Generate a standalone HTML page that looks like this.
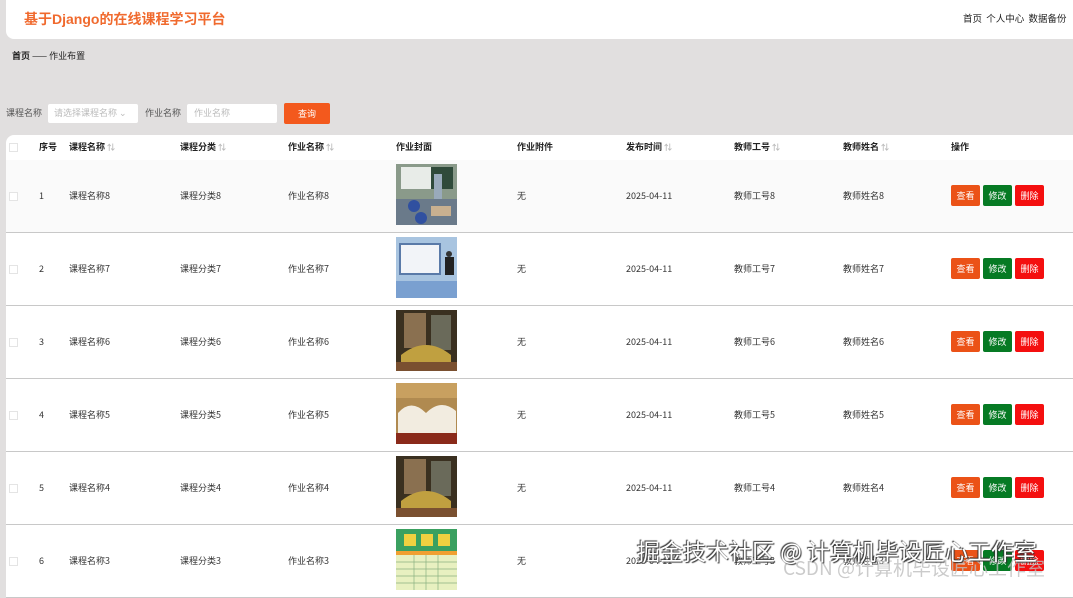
<!DOCTYPE html>
<html><head><meta charset="utf-8"><style>
*{margin:0;padding:0;box-sizing:border-box}
body{width:1073px;height:585px;overflow:hidden;background:#e1dfdf;font-family:"Noto Sans CJK SC","Liberation Sans",sans-serif;font-size:9px;line-height:12px;color:#333;position:relative}
.a{position:absolute;white-space:nowrap}
#hd{position:absolute;left:6px;top:0;width:1067px;height:39px;background:#fff;border-radius:0 0 0 8px}
.b{font-weight:bold;color:#222}
.row{position:absolute;left:6px;width:1067px;height:73px;background:#fff;border-bottom:1px solid #c8c8c8}
.cb{position:absolute;left:3px;width:9px;height:9px;border:1px solid #e4e4e4;background:#fff}
.img{position:absolute;left:390px;top:4px;width:61px;height:61px}
.btn{position:absolute;width:29px;height:21px;border-radius:2px;color:#fff;text-align:center;line-height:21px;font-size:9px}
.s{color:#bbb;font-size:8px}
</style></head><body>
<div id="hd"></div>
<div class="a" style="left:24px;top:10px;font-size:14px;line-height:18px;font-weight:bold;color:#f06a2e;font-family:'Liberation Sans','Noto Sans CJK SC',sans-serif">基于Django的在线课程学习平台</div>
<div class="a" style="left:963px;top:12px;font-size:9.5px;color:#222">首页&nbsp;&nbsp;个人中心&nbsp;&nbsp;数据备份</div>
<div class="a" style="left:12px;top:50px;color:#222"><b>首页</b> —— 作业布置</div>
<div class="a" style="left:6px;top:107px;color:#555">课程名称</div>
<div class="a" style="left:48px;top:104px;width:90px;height:19px;background:#fff;border-radius:2px;color:#bbb;padding:3px 6px">请选择课程名称 ⌄</div>
<div class="a" style="left:145px;top:107px;color:#555">作业名称</div>
<div class="a" style="left:187px;top:104px;width:90px;height:19px;background:#fff;border-radius:2px;color:#bbb;padding:3px 7px">作业名称</div>
<div class="a" style="left:284px;top:103px;width:46px;height:21px;background:#f3591d;border-radius:2px;color:#fff;text-align:center;line-height:21px">查询</div>
<div class="a" style="left:6px;top:135px;width:1067px;height:25px;background:#fff;border-radius:8px 0 0 0"></div>
<div class="a" style="left:9px;top:143px;width:9px;height:9px;border:1px solid #e4e4e4"></div>
<div class="a b" style="left:39px;top:141px">序号</div>
<div class="a b" style="left:69px;top:141px">课程名称 <span class="s">⇅</span></div>
<div class="a b" style="left:180px;top:141px">课程分类 <span class="s">⇅</span></div>
<div class="a b" style="left:288px;top:141px">作业名称 <span class="s">⇅</span></div>
<div class="a b" style="left:396px;top:141px">作业封面</div>
<div class="a b" style="left:517px;top:141px">作业附件</div>
<div class="a b" style="left:626px;top:141px">发布时间 <span class="s">⇅</span></div>
<div class="a b" style="left:734px;top:141px">教师工号 <span class="s">⇅</span></div>
<div class="a b" style="left:843px;top:141px">教师姓名 <span class="s">⇅</span></div>
<div class="a b" style="left:951px;top:141px">操作</div>

<div id="rows"></div>
<script>
var imgs=[
'<svg class="img" viewBox="0 0 61 61"><rect width="61" height="61" fill="#8a9a8a"/><rect x="5" y="3" width="30" height="22" fill="#e8ece8"/><rect x="35" y="3" width="22" height="22" fill="#2f4a3a"/><rect x="38" y="10" width="8" height="30" fill="#9ab"/><rect x="0" y="35" width="61" height="26" fill="#6a7a8a"/><circle cx="18" cy="42" r="6" fill="#3050a0"/><circle cx="25" cy="54" r="6" fill="#3050a0"/><rect x="35" y="42" width="20" height="10" fill="#c8b090"/></svg>',
'<svg class="img" viewBox="0 0 61 61"><rect width="61" height="61" fill="#a8c4e0"/><rect x="3" y="6" width="42" height="32" fill="#5a7aa8"/><rect x="5" y="8" width="38" height="28" fill="#f2f4f8"/><rect x="0" y="44" width="61" height="17" fill="#7aa0d0"/><rect x="49" y="20" width="9" height="18" fill="#222"/><circle cx="53" cy="17" r="3" fill="#333"/></svg>',
'<svg class="img" viewBox="0 0 61 61"><rect width="61" height="61" fill="#3a3020"/><rect x="8" y="3" width="22" height="35" fill="#8a7050"/><rect x="35" y="5" width="20" height="35" fill="#6a6a5a"/><path d="M5 45 Q30 25 55 45 L55 52 L5 52Z" fill="#c0a040"/><rect x="0" y="52" width="61" height="9" fill="#7a5030"/></svg>',
'<svg class="img" viewBox="0 0 61 61"><rect width="61" height="61" fill="#b08a50"/><rect x="0" y="0" width="61" height="15" fill="#c8a060"/><path d="M2 30 Q15 15 30 30 Q45 15 60 28 L60 50 L2 50Z" fill="#f2ece0"/><rect x="0" y="50" width="61" height="11" fill="#8a2a1a"/></svg>',
'',
'<svg class="img" viewBox="0 0 61 61"><rect width="61" height="61" fill="#e8f0c0"/><rect width="61" height="22" fill="#3aa060"/><rect x="8" y="5" width="12" height="12" fill="#f0d040"/><rect x="25" y="5" width="12" height="12" fill="#f0d040"/><rect x="42" y="5" width="12" height="12" fill="#f0d040"/><rect x="0" y="22" width="61" height="4" fill="#f0a030"/><path d="M0 33H61M0 40H61M0 47H61M0 54H61M18 26V61M30 26V61M42 26V61" stroke="#8ab080" stroke-width="0.7"/></svg>'];
imgs[4]=imgs[2];
var h='';
for(var i=0;i<6;i++){var t=160+i*73,n=8-i;
h+='<div class="row" style="top:'+t+'px'+(i==0?';background:#fafafa':'')+'"><div class="cb" style="top:32px"></div>'+imgs[i]+'</div>';
var y=t+30;
h+='<div class="a" style="left:39px;top:'+y+'px">'+(i+1)+'</div>';
h+='<div class="a" style="left:69px;top:'+y+'px">课程名称'+n+'</div>';
h+='<div class="a" style="left:180px;top:'+y+'px">课程分类'+n+'</div>';
h+='<div class="a" style="left:288px;top:'+y+'px">作业名称'+n+'</div>';
h+='<div class="a" style="left:517px;top:'+y+'px">无</div>';
h+='<div class="a" style="left:626px;top:'+y+'px">2025-04-11</div>';
h+='<div class="a" style="left:734px;top:'+y+'px">教师工号'+n+'</div>';
h+='<div class="a" style="left:843px;top:'+y+'px">教师姓名'+n+'</div>';
var by=t+25;
h+='<div class="btn a" style="left:951px;top:'+by+'px;background:#eb5217">查看</div>';
h+='<div class="btn a" style="left:983px;top:'+by+'px;background:#067a24">修改</div>';
h+='<div class="btn a" style="left:1015px;top:'+by+'px;background:#f40f0f">删除</div>';
}
document.getElementById('rows').innerHTML=h;
</script>
<div class="a" style="left:783px;top:557px;font-size:19px;line-height:22px;color:rgba(190,190,190,0.8)">CSDN @计算机毕设匠心工作室</div>
<div class="a" style="left:637px;top:536px;font-size:23px;line-height:28px;color:#fff;text-shadow:1px 1px 1px #333,-1px -1px 1px #333">掘金技术社区 @ 计算机毕设匠心工作室</div>
</body></html>
